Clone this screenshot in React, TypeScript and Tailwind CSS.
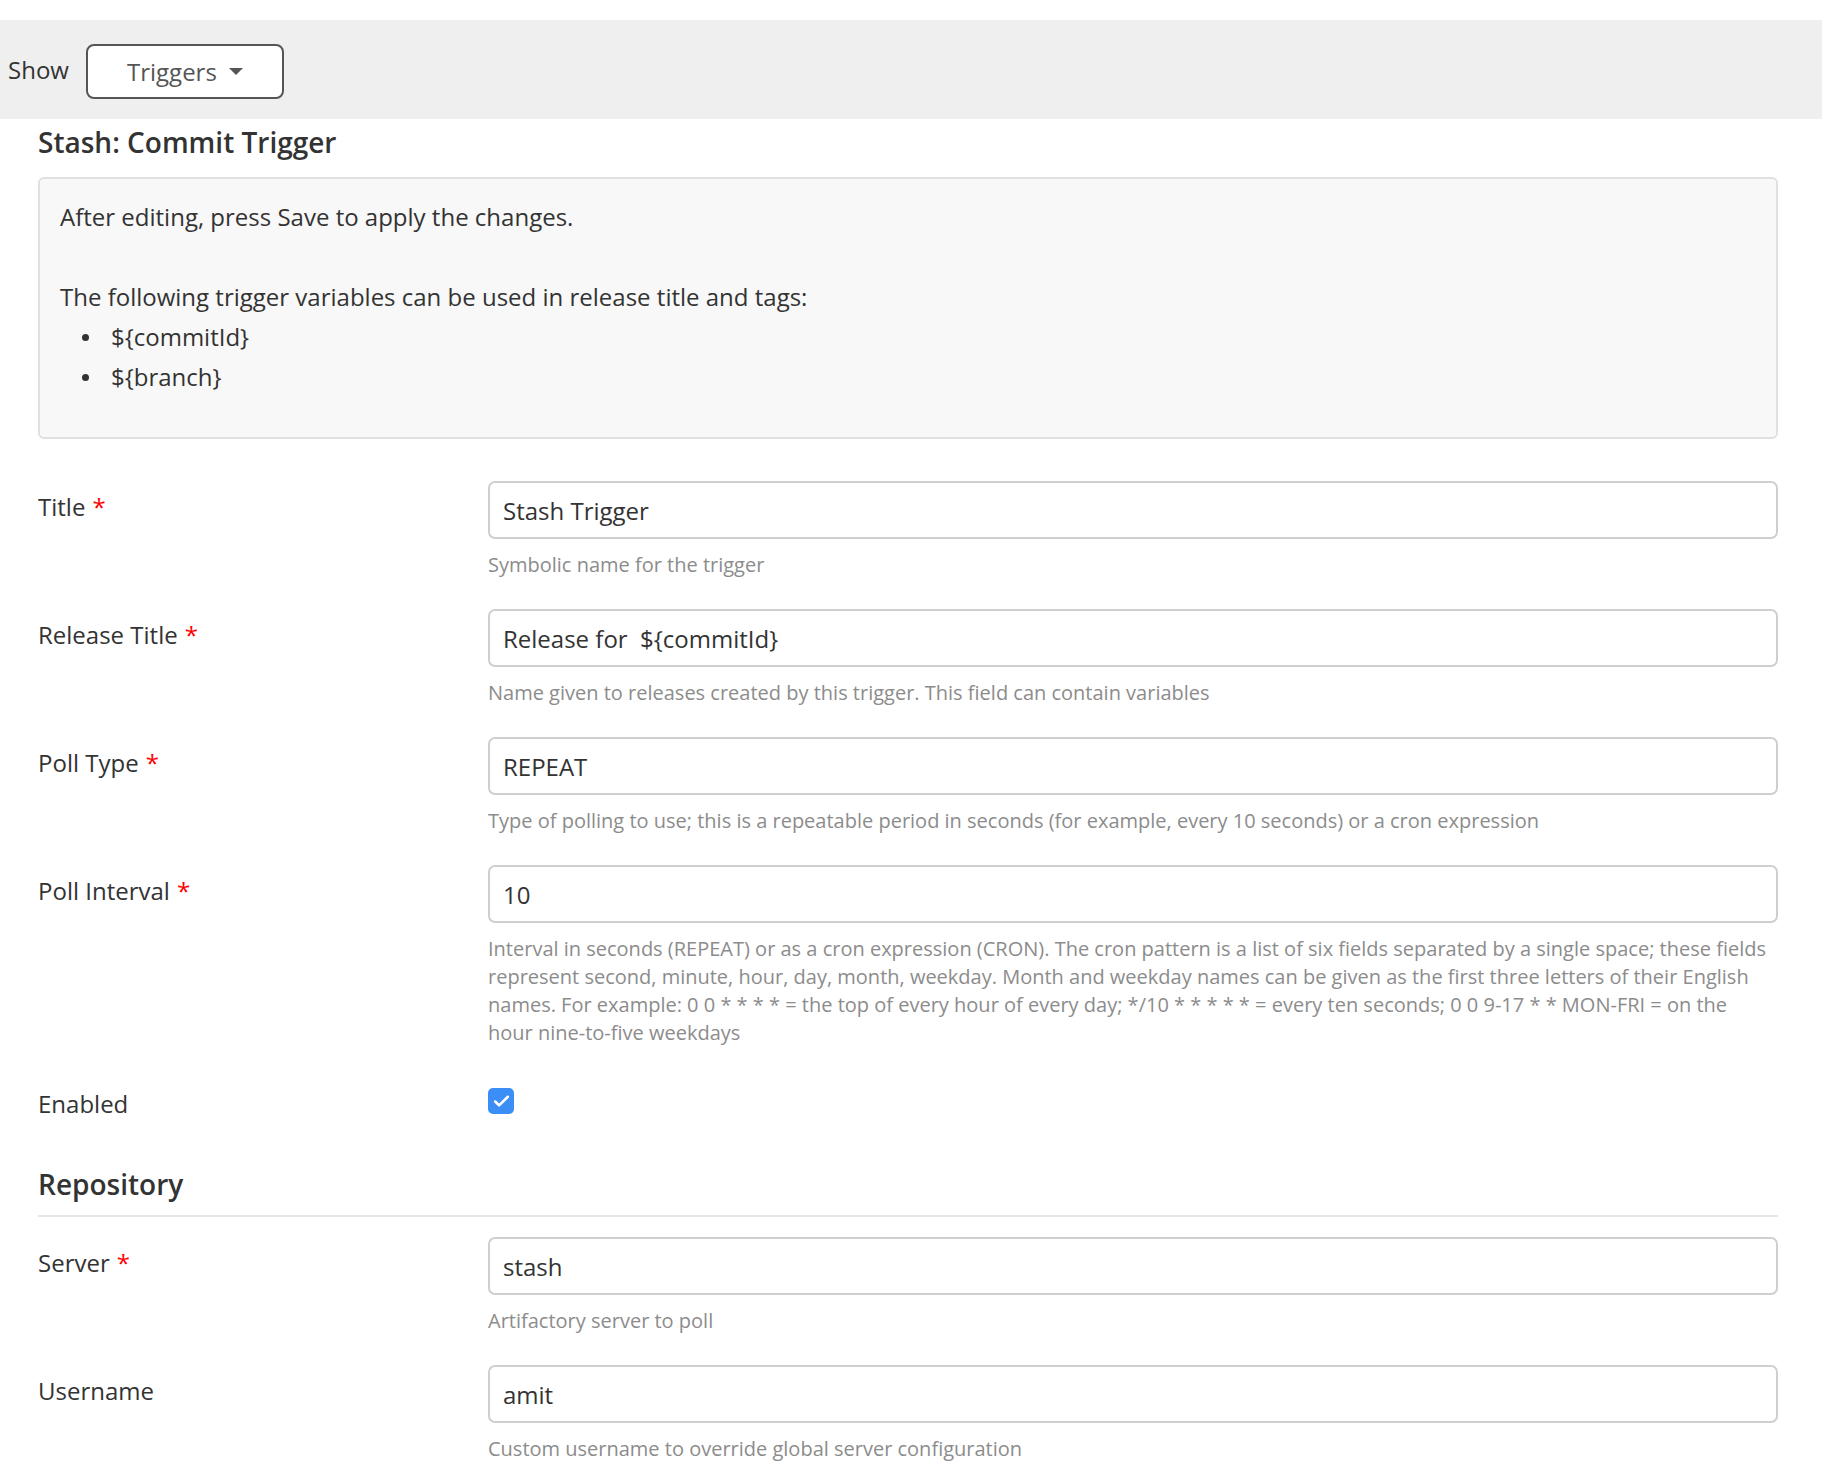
import { Check } from 'lucide-react'

type Field = {
  label: string
  value: string
  help: string
  required?: boolean
}

const triggerFields: Field[] = [
  { label: 'Title', value: 'Stash Trigger', help: 'Symbolic name for the trigger', required: true },
  {
    label: 'Release Title',
    value: 'Release for  ${commitId}',
    help: 'Name given to releases created by this trigger. This field can contain variables',
    required: true,
  },
  {
    label: 'Poll Type',
    value: 'REPEAT',
    help: 'Type of polling to use; this is a repeatable period in seconds (for example, every 10 seconds) or a cron expression',
    required: true,
  },
  {
    label: 'Poll Interval',
    value: '10',
    help: 'Interval in seconds (REPEAT) or as a cron expression (CRON). The cron pattern is a list of six fields separated by a single space; these fields represent second, minute, hour, day, month, weekday. Month and weekday names can be given as the first three letters of their English names. For example: 0 0 * * * * = the top of every hour of every day; */10 * * * * * = every ten seconds; 0 0 9-17 * * MON-FRI = on the hour nine-to-five weekdays',
    required: true,
  },
]

const repoFields: Field[] = [
  { label: 'Server', value: 'stash', help: 'Artifactory server to poll', required: true },
  { label: 'Username', value: 'amit', help: 'Custom username to override global server configuration' },
]

const variables = ['${commitId}', '${branch}']

function FormRow({ field }: { field: Field }) {
  return (
    <div className="grid grid-cols-[450px_1fr] pb-[30px]">
      {/* label sits a bit lower than the input top */}
      <div className="mt-[9px] text-[24px] leading-[34px] text-[#333]">
        {field.label}
        {field.required && <span className="ml-[7px] text-[#ff0000]">*</span>}
      </div>
      <div>
        <input
          readOnly
          value={field.value}
          className="w-full h-[58px] px-[13px] rounded-[7px] border-2 border-[#cfcfcf] bg-white text-[24px] text-[#333] outline-none"
        />
        <p className="mt-[12px] pr-[8px] text-[20px] leading-[28px] text-[#8c8c8c]">{field.help}</p>
      </div>
    </div>
  )
}

export default function App() {
  return (
    <div className="min-h-screen bg-white pt-[20px] font-['Open_Sans',sans-serif] text-[#333]">
      {/* barre du haut */}
      <div className="flex items-center h-[99px] bg-[#efefef] pl-[8px]">
        <span className="text-[24px] text-[#333]">Show</span>
        <button className="ml-[17px] mt-[4px] flex items-center justify-center gap-[12px] w-[198px] h-[55px] rounded-[8px] border-2 border-[#555] bg-white text-[24px] text-[#555]">
          Triggers
          <span className="w-0 h-0 border-l-[7px] border-r-[7px] border-t-[7px] border-l-transparent border-r-transparent border-t-[#555]" />
        </button>
      </div>

      <div className="pl-[38px] pr-[44px]">
        <h2 className="mt-[5px] text-[28px] leading-[36px] font-semibold text-[#333]">Stash: Commit Trigger</h2>

        <div className="mt-[17px] rounded-[6px] border-2 border-[#e0e0e0] bg-[#f8f8f8] px-[20px] pt-[18px] pb-[40px] text-[24px] leading-[40px] text-[#333]">
          <p>After editing, press Save to apply the changes.</p>
          <p className="mt-[40px]">The following trigger variables can be used in release title and tags:</p>
          <ul className="pl-[22px]">
            {variables.map((v) => (
              <li key={v} className="flex items-center">
                <span className="w-[7px] h-[7px] rounded-full bg-[#333]" />
                <span className="ml-[22px]">{v}</span>
              </li>
            ))}
          </ul>
        </div>

        <div className="mt-[42px]">
          {triggerFields.map((f) => (
            <FormRow key={f.label} field={f} />
          ))}

          <div className="grid grid-cols-[450px_1fr] h-[54px]">
            <div className="mt-[10px] text-[24px] leading-[34px] text-[#333]">Enabled</div>
            <div className="mt-[11px]">
              <div className="flex items-center justify-center w-[26px] h-[26px] rounded-[5px] bg-[#3b8ef6]">
                <Check className="w-[19px] h-[19px] text-white" strokeWidth={3.2} />
              </div>
            </div>
          </div>
        </div>

        <h2 className="mt-[35px] text-[28px] leading-[36px] font-semibold text-[#333]">Repository</h2>
        <div className="mt-[13px] h-[2px] bg-[#e6e6e6]" />

        <div className="mt-[20px]">
          {repoFields.map((f) => (
            <FormRow key={f.label} field={f} />
          ))}
        </div>
      </div>
    </div>
  )
}
